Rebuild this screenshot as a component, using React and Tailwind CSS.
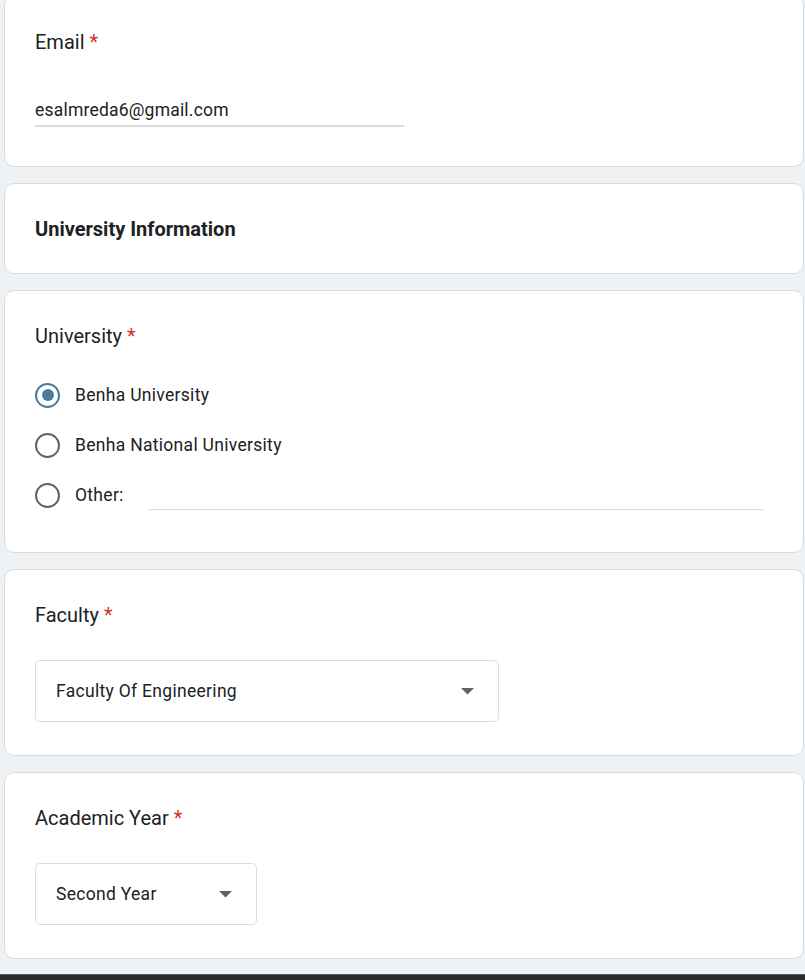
import React from "react";

const font = { fontFamily: "Roboto, 'Noto Sans', Arial, sans-serif" };

function Card({ children, className = "" }) {
  return (
    <div className={"bg-white border border-[#dadce0] rounded-[10px] " + className}>
      {children}
    </div>
  );
}

function Title({ children }) {
  return (
    <div className="h-[32px] flex items-center text-[20px] text-[#202124] leading-[32px]">
      <span>{children}</span>
      <span className="text-[#d93025] ml-[5px]">*</span>
    </div>
  );
}

function Radio({ checked }) {
  return (
    <div
      className={
        "w-[25px] h-[25px] rounded-full border-[2.5px] flex items-center justify-center shrink-0 " +
        (checked ? "border-[#4a7b9b]" : "border-[#5f6368]")
      }
    >
      {checked && <div className="w-[12px] h-[12px] rounded-full bg-[#4a7b9b]" />}
    </div>
  );
}

function Arrow() {
  return (
    <svg width="13" height="7" viewBox="0 0 13 7" className="shrink-0">
      <path d="M0 0 L13 0 L6.5 6.5 Z" fill="#5f6368" />
    </svg>
  );
}

function Dropdown({ text, width }) {
  return (
    <div
      className="h-[62px] border border-[#dadce0] rounded-[5px] flex items-center justify-between pl-[20px] pr-[24px]"
      style={{ width }}
    >
      <span className="text-[17.5px] tracking-[0.3px] text-[#202124]">{text}</span>
      <Arrow />
    </div>
  );
}

export default function App() {
  return (
    <div className="min-h-[980px] bg-[#eef2f5] flex flex-col" style={font}>
      <div className="ml-[4px] w-[800px] flex flex-col gap-[16px] -mt-[5px]">
        <Card className="px-[30px] pt-[30px] pb-[39px]">
          <Title>Email</Title>
          <div className="mt-[41px] w-[369px] border-b-2 border-[#dadce0] pb-[4px]">
            <div className="h-[22px] leading-[22px] text-[17.5px] tracking-[0.2px] text-[#202124]">
              esalmreda6@gmail.com
            </div>
          </div>
        </Card>

        <Card className="px-[30px] pt-[29px] pb-[28px]">
          <div className="h-[32px] flex items-center text-[20px] font-bold text-[#202124]">
            University Information
          </div>
        </Card>

        <Card className="px-[30px] pt-[29px] pb-[32px]">
          <Title>University</Title>
          <div className="mt-[18px] flex flex-col">
            <div className="h-[50px] flex items-center gap-[15px]">
              <Radio checked />
              <span className="text-[17.5px] tracking-[0.3px] text-[#202124]">Benha University</span>
            </div>
            <div className="h-[50px] flex items-center gap-[15px]">
              <Radio />
              <span className="text-[17.5px] tracking-[0.3px] text-[#202124]">Benha National University</span>
            </div>
            <div className="h-[50px] flex items-center gap-[15px]">
              <Radio />
              <span className="text-[17.5px] tracking-[0.3px] text-[#202124]">Other:</span>
              <div className="flex-1 self-stretch relative ml-[10px] mr-[10px]">
                <div className="absolute left-0 right-0 top-[39px] border-b border-[#dadce0]" />
              </div>
            </div>
          </div>
        </Card>

        <Card className="px-[30px] pt-[29px] pb-[33px]">
          <Title>Faculty</Title>
          <div className="mt-[29px]">
            <Dropdown text="Faculty Of Engineering" width={464} />
          </div>
        </Card>

        <Card className="px-[30px] pt-[29px] pb-[33px]">
          <Title>Academic Year</Title>
          <div className="mt-[29px]">
            <Dropdown text="Second Year" width={222} />
          </div>
        </Card>
      </div>
      <div className="flex-1" />
      <div className="h-[6px] bg-[#2b2b2b] border-t border-[#5a5a5a]" />
    </div>
  );
}
